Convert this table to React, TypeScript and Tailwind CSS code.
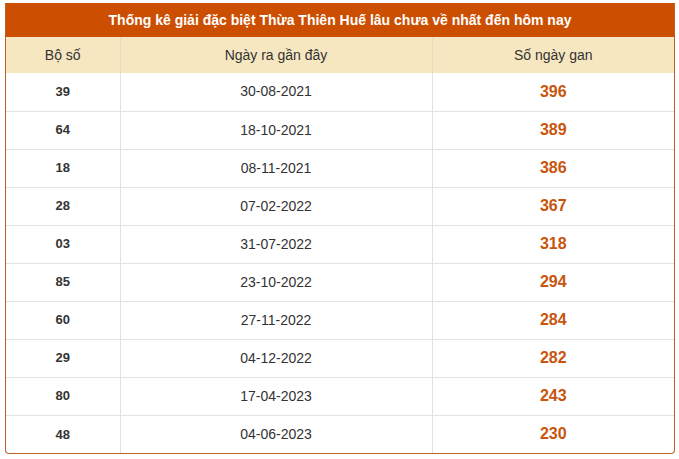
const rows = [
  ['39', '30-08-2021', '396'],
  ['64', '18-10-2021', '389'],
  ['18', '08-11-2021', '386'],
  ['28', '07-02-2022', '367'],
  ['03', '31-07-2022', '318'],
  ['85', '23-10-2022', '294'],
  ['60', '27-11-2022', '284'],
  ['29', '04-12-2022', '282'],
  ['80', '17-04-2023', '243'],
  ['48', '04-06-2023', '230'],
];

export default function App() {
  return (
    <div className="min-h-screen bg-white pt-[3px] pl-[5px]" style={{ fontFamily: '"Liberation Sans", Arial, sans-serif' }}>
      <div className="w-[670px] border border-[#c0602a] border-t-0 rounded-b-[4px] overflow-hidden">
        <div className="h-[34px] bg-[#cc4e00] flex items-center justify-center text-white font-bold text-[14px]">
          Thống kê giải đặc biệt Thừa Thiên Huế lâu chưa về nhất đến hôm nay
        </div>
        <table className="w-full border-collapse text-[#333]">
          <thead>
            <tr className="h-[36px] bg-[#f6e7c1] text-[14px]">
              <th className="w-[114px] font-normal">Bộ số</th>
              <th className="w-[312px] font-normal border-l border-[#e6dcc0]">Ngày ra gần đây</th>
              <th className="font-normal border-l border-[#e6dcc0]">Số ngày gan</th>
            </tr>
          </thead>
          <tbody>
            {rows.map(([num, date, gan], i) => (
              <tr key={num} className={`h-[38px] ${i > 0 ? 'border-t border-[#e2e2e2]' : ''}`}>
                <td className="text-center font-bold text-[13px]">{num}</td>
                <td className="text-center text-[14px] border-l border-[#e2e2e2]">{date}</td>
                <td className="text-center font-bold text-[16px] text-[#c8550e] border-l border-[#e2e2e2]">{gan}</td>
              </tr>
            ))}
          </tbody>
        </table>
      </div>
    </div>
  );
}
